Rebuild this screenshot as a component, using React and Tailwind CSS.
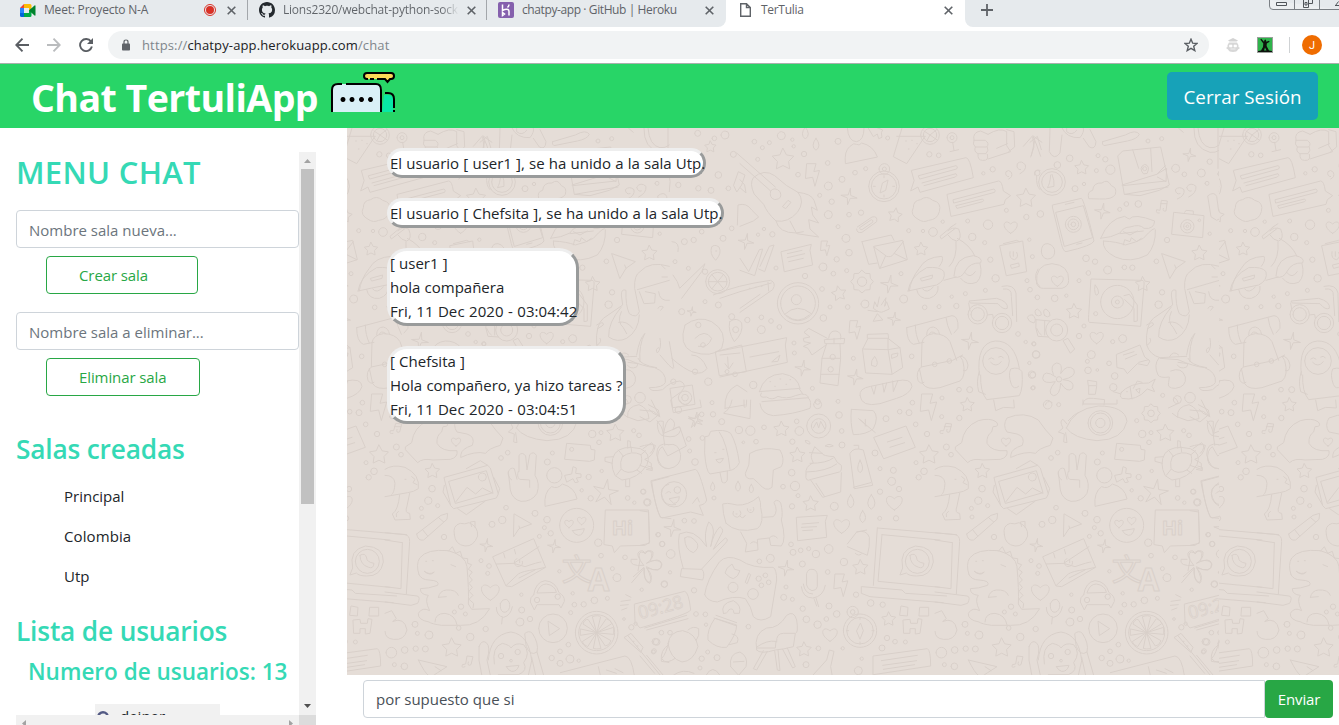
import React from "react";

/* ---------- wallpaper drawing helpers ---------- */

const dots = (list) =>
  list
    .map(([x, y, r]) => `M${x - r} ${y}a${r} ${r} 0 1 0 ${2 * r} 0a${r} ${r} 0 1 0 ${-2 * r} 0`)
    .join("");

const star = (x, y, r, n = 5, inner = 0.5, rot = -90) => {
  const pts = [];
  for (let i = 0; i < n * 2; i++) {
    const a = ((rot + (i * 180) / n) * Math.PI) / 180;
    const k = i % 2 ? r * inner : r;
    pts.push(`${(x + k * Math.cos(a)).toFixed(1)} ${(y + k * Math.sin(a)).toFixed(1)}`);
  }
  return `M${pts.join("L")}Z`;
};

const stars = (list) => list.map(([x, y, r, rot]) => star(x, y, r, 5, 0.52, rot ?? -90)).join("");
const sparks = (list) => list.map(([x, y, r, rot]) => star(x, y, r, 4, 0.25, rot ?? -80)).join("");

const heart = (x, y, s) =>
  `M${x} ${y + s}C${x - s * 1.7} ${y} ${x - s * 0.9} ${y - s * 1.3} ${x} ${y - s * 0.4}C${x + s * 0.9} ${y - s * 1.3} ${x + s * 1.7} ${y} ${x} ${y + s}Z`;

const bolt = (x, y, s) =>
  `M${x - s * 0.5} ${y - s}L${x + s * 0.3} ${y - s}L${x + s * 0.1} ${y - s * 0.3}L${x + s * 0.6} ${y - s * 0.4}L${x + s * 0.2} ${y + s}L${x} ${y + s * 0.2}L${x - s * 0.6} ${y + s * 0.3}Z`;

const drop = (x, y, s) => `M${x} ${y - s}Q${x + s} ${y + s * 0.3} ${x} ${y + s}Q${x - s} ${y + s * 0.3} ${x} ${y - s}Z`;

const Patch = ({ x, y, children }) => (
  <g transform={`translate(${x} ${y}) scale(.33333)`}>{children}</g>
);

function Doodles() {
  return (
    <g id="doodles" fill="none" stroke="#d9d0ca" strokeWidth="3" strokeLinecap="round" strokeLinejoin="round">
      {/* top right of a repeat */}
      <Patch x={740} y={125}>
        <path d={dots([[124,32,12],[157,44,5],[43,50,7],[67,68,6],[88,53,6],[161,64,5],[53,103,6],[192,87,8],[294,49,9],[263,114,7],[174,149,7],[306,163,9],[345,143,7],[377,131,6],[265,183,12],[239,211,6],[275,230,8],[265,269,12],[327,269,7],[363,263,8],[294,305,6],[318,340,12],[97,328,8],[72,312,5],[54,329,5],[327,383,10],[290,403,8],[249,426,12],[280,446,7],[195,453,8],[108,429,6],[320,437,6],[483,446,6],[246,492,7],[270,546,6],[323,546,7],[375,537,12],[491,522,12],[250,579,10],[22,585,8],[64,577,7],[93,588,7],[64,614,12],[118,606,7],[162,654,6],[163,684,6],[340,700,6],[515,694,7],[217,790,6],[40,780,11],[233,830,8],[294,829,6],[443,39,6]])} />
        <path d={dots([[568,88,8],[596,91,7],[730,145,5],[758,133,8],[799,256,6],[859,276,8],[683,288,6],[744,299,14],[608,290,5],[697,336,11],[579,321,13],[506,317,6],[549,318,5],[734,353,6],[751,404,8],[767,460,11],[868,344,5],[877,395,6],[861,467,6],[676,506,6],[635,515,5],[736,496,6],[554,547,7],[597,545,6],[649,543,8],[870,494,7],[834,627,7],[857,651,5],[881,656,6],[889,689,11],[868,714,5],[876,749,11],[878,789,6],[689,794,9],[657,794,7],[606,819,6]])} />
        <path d={stars([[129,104,34],[465,271,22,-80],[543,373,21],[297,506,23,-100],[858,220,30]])} />
        <path d={sparks([[327,215,25],[448,478,27],[18,350,24],[462,582,20],[188,730,24],[346,757,24],[690,648,26]])} />
        <path d={bolt(218, 150, 34) + bolt(256, 370, 22) + bolt(345, 615, 28) + drop(228, 58, 18) + drop(196, 24, 18)} />
        <path d="M322 9Q325 50 350 50Q372 46 372 9M316 115Q312 78 330 64Q342 52 350 58Q357 64 365 54Q400 62 412 95Z" />
        <path d="M385 10l15 25l12 -8l4 14l10 -4l-2 -14l4 -8l-24 -10" />
        <path d={dots([[432,184,46],[432,184,38],[433,132,16],[433,132,6]])} />
        <path d="M444 166L437 196L420 204L427 175ZM400 184h6M458 184h6M432 152v6M432 210v6" />
        <path d="M486 9L460 95L500 116L555 34M470 34H556M497 48h2M515 46h2M530 56h2M505 72h2" />
        <path d={dots([[570,30,28],[570,30,20],[636,38,15],[636,38,6]])} />
        <path d="M570 30L590 14M570 30L590 44M570 30L560 48M570 30L552 18M638 52L642 76M630 80L656 74" />
        <path d="M702 45Q696 22 722 18L744 28M702 46h34Q750 56 740 66H706Q696 58 702 46M706 66Q700 80 714 86H738Q748 76 742 66M714 88Q712 106 728 106Q748 108 742 88M744 28Q780 6 800 20V62L812 80L744 102M770 70L802 56M800 14L822 20L824 66L806 80" />
        <path d="M850 64L878 32L906 52M880 36L890 60L902 94M878 36L882 66L872 96" />
        <path d="M515 136L678 98Q690 98 700 158L540 202L534 186L512 198L522 168ZM536 152L648 122Q656 124 650 132L540 162ZM546 174L648 146Q654 152 646 156L552 182" />
        <path d="M622 208L776 168Q786 168 790 198L812 212L796 224L792 238L634 274ZM640 224L762 192Q768 196 764 202L642 234ZM648 242L728 222Q734 228 728 230L652 250Z" />
        <path d="M806 162Q820 156 814 142Q806 132 798 140Q794 154 806 155M840 146Q860 136 856 120Q844 104 832 116Q828 134 842 134M884 150q-2 -20 16 -14M890 154q-2 30 10 40" />
        <path d="M536 284Q508 270 520 248Q520 226 542 224Q560 210 578 226Q606 232 598 260Q592 284 566 286Q550 294 536 284Z" />
        <path d={heart(812, 305, 20)} />
        <path d="M352 306L396 276Q414 272 410 290L366 322Q350 326 350 312M362 306L394 284Q402 286 398 292L366 314Q356 314 360 306" />
        <path d="M0 116L92 198Q104 184 120 200Q130 222 104 224Q86 218 92 198M-10 84L106 186M42 206Q28 176 40 158Q72 130 104 152Q140 186 174 202Q196 230 172 262Q144 294 108 288Q80 262 72 240ZM128 244L144 226L153 232L138 250ZM174 202Q214 206 222 226L232 256L214 246L218 270L236 294L206 284L210 312L236 336L170 326L150 288M108 288Q116 324 168 324L190 320" />
        <path d="M0 164L14 180L18 204L0 188M-8 300L-6 240Q20 232 36 256L56 276L40 288L0 304" />
        <path d="M0 400L26 440L58 374L68 372L44 452L0 436M60 424L88 364L102 360L74 440L56 432" />
        <path d="M124 380L214 358L210 376L218 420L134 440ZM142 386L186 376M142 398L194 386M146 410L190 400" />
        <path d="M366 350L454 330L462 346M366 350L386 418L412 414M402 364L488 346L502 404L420 430ZM402 366L440 394Q454 398 460 388L490 350M420 430L436 394M464 386L500 404" />
        <path d={star(366, 470, 34, 8, 0.8) + dots([[366, 470, 14]])} />
        <path d={dots([[174,535,62],[174,535,52],[169,524,15]])} />
        <path d="M134 568Q172 532 214 566M140 572Q174 600 208 570" />
        <path d="M-80 510Q-10 480 92 466Q110 474 98 494L0 562M-60 520L0 500L94 474M84 472L86 498M0 550L60 508M28 490h2M46 487h2M64 484h2" />
        <path d="M418 516L412 546L404 530L400 550Q420 566 430 560L448 552L440 530L434 544L438 518L424 540M384 556L412 560M400 588L412 566L428 584Z" />
        <path d="M646 310L604 342L600 334L636 304M630 308L648 296M624 318Q636 304 656 312Q668 342 650 348Q634 346 624 330M648 350Q652 400 628 424M652 340Q690 360 704 392M508 498Q512 462 538 430Q556 396 606 394Q612 406 598 424M504 498Q510 454 560 428Q600 424 612 440Q618 466 590 480Q540 490 504 498M612 466L648 456M642 452Q644 396 700 392Q730 398 722 414Q690 412 676 438Q664 462 642 456M530 494Q536 524 568 520Q598 510 594 484M662 460Q680 484 710 472Q730 452 720 416M548 492Q560 508 580 486M674 442Q690 464 706 440M542 460L578 450L576 460L546 468Z" />
        <path d="M780 362L848 348L860 440L800 452ZM790 356L830 346L838 350M810 380Q806 402 824 404Q838 396 830 382M820 380V394M812 420L836 414L838 424L816 430Z" />
        <path d={dots([[713,568,29],[713,568,20],[786,594,29],[786,594,20]])} />
        <path d="M688 528L770 520Q806 530 802 550Q790 556 774 536L692 534ZM686 534L690 558M742 570L758 568L760 580M786 484Q822 476 828 504L830 590M790 492Q816 488 814 514L818 572" />
        <path d="M500 608L636 572Q656 572 654 610L642 624M500 608Q500 650 520 658L552 652M526 600Q526 630 538 654M618 578Q620 600 634 628M546 652Q550 630 580 626Q616 626 630 650L650 706M546 652L544 726L638 706L668 690M538 730L548 776Q560 796 600 788L660 768Q680 752 668 706L660 694M560 630Q560 606 580 606Q596 610 598 626M568 628Q572 614 588 626M544 726Q526 740 534 766Q542 780 552 772M660 694Q678 692 684 720Q682 744 670 736" />
        <path d={dots([[584, 718, 7], [628, 708, 7]])} />
        <path d="M368 672L384 640L444 640L480 668L488 728L456 748L378 744ZM368 672L444 674L480 668M444 640V672L456 746M382 640V628L444 626L446 640M394 720Q392 706 404 694Q418 714 408 724ZM456 688L474 684L472 694L456 700Z" />
        <path d="M266 640Q268 616 288 618Q306 622 302 642M254 644L314 640L312 656L256 656ZM260 656L246 700L240 774L294 782L302 700L300 656M246 700H302M242 748H298M282 640V656M262 640L206 610L192 622L210 636L190 640L192 650L212 654L190 664L204 670L216 690L258 660" />
        <path d={dots([[278, 696, 8], [272, 733, 8]])} />
        <path d="M-70 680L140 638L136 660L142 712L-60 756M-60 690L0 684M30 696L116 680M96 710L120 690L114 708Z" />
        <path d="M58 800Q72 748 128 746Q174 754 180 790M58 800L180 790M64 804Q54 820 80 816Q96 828 114 814Q140 824 166 812L188 806L178 792M66 830L206 818Q200 806 188 808M60 836Q64 868 100 872Q160 868 210 850Q216 830 206 820M90 770h2M120 762h2M150 764h2M104 784h2M138 778h2" />
        <path d="M360 812Q356 790 392 784L468 768Q514 758 516 784Q510 808 470 820L420 836Q364 848 360 812M394 784L402 808L408 782M428 776L432 802L440 774M458 768L460 800L474 766" />
        <path d={dots([[768, 708, 40]])} />
        <path d="M718 750Q708 654 766 648Q824 646 838 730M718 740Q708 768 716 800L736 808M722 750Q720 800 740 824L838 812Q850 790 846 740Q836 724 812 732Q804 750 814 778Q822 796 836 784M746 702Q754 694 762 702M776 696Q784 690 790 698M752 712Q768 730 784 710" />
        <path d="M878 570q14 12 4 24q-16 -2 -20 -16q4 -10 16 -8M890 610q6 16 14 20M894 432q-18 30 6 54" />
      </Patch>

      {/* top middle */}
      <Patch x={1030} y={125}>
        <path d={dots([[354,48,6],[395,41,6],[119,100,10],[204,92,6],[226,103,8],[241,134,14],[199,137,6],[437,130,12],[539,110,8],[463,148,7],[514,144,12],[531,175,6],[135,191,9],[162,177,5],[31,267,10],[289,237,7],[325,237,10],[269,253,6],[411,345,8],[568,147,5],[168,400,10],[195,410,8],[233,435,12],[283,427,7],[307,428,8],[379,409,7],[175,444,7],[147,467,6],[396,502,8],[386,539,11],[74,520,10],[22,517,7],[109,512,5],[162,603,6],[147,633,8],[12,657,6],[18,688,11],[278,641,12],[248,650,6],[184,689,12],[174,736,10],[172,709,6],[237,715,7],[254,753,10],[250,787,11],[202,735,4],[398,811,6],[442,824,12],[480,818,16],[8,750,9],[539,326,5],[10,788,6]])} />
        <path d={stars([[155,129,22],[508,385,24],[338,478,23],[132,560,24]])} />
        <path d={sparks([[478,90,20],[217,259,24]])} />
        <path d={heart(200, 636, 20)} />
        <path d="M0 52L22 34L34 74M4 92L14 48M60 9L58 80Q72 108 90 84L96 30M96 9Q110 40 150 38Q164 20 160 9M110 9V20Q126 34 140 16M160 40L178 66Q196 76 198 50L180 14M218 50L286 30Q318 12 328 28Q322 42 292 48L222 62Q214 58 218 50M446 10L460 22" />
        <path d={dots([[66,171,40],[66,171,31],[82,120,10],[22,144,8]])} />
        <path d="M66 148Q74 166 72 184L52 188Q60 178 62 150" />
        <path d="M176 220Q170 200 188 196Q190 172 216 174Q232 160 244 182Q262 188 256 208Q248 224 210 222Z" />
        <path d="M264 92L278 78L392 66L418 180L388 196L330 212L284 208ZM276 180L380 148L406 122M278 182L408 168M284 208L414 186M308 74L326 130M362 70L366 140M380 148L410 130L408 170L382 156M340 146Q324 128 344 118Q362 122 352 144Z" />
        <path d={dots([[344, 131, 6]])} />
        <path d="M442 222Q466 212 462 194Q448 182 436 194Q438 210 450 206M476 216Q500 204 498 184Q482 170 470 186Q474 202 484 198M388 264Q376 266 380 254L390 256L394 226L412 228L408 258Q396 260 400 250M392 236H410" />
        <path d="M68 240L154 220Q162 222 192 348Q188 362 108 380Q100 380 94 356L68 250ZM78 262L160 242L188 338L104 364ZM106 238L132 232M140 358L156 354" />
        <path d={dots([[130,298,24],[130,298,16],[130,298,7]])} />
        <path d="M212 340Q236 280 284 274Q292 280 298 282Q312 264 374 288Q372 314 342 310Q330 296 300 306Q280 306 270 324Q244 338 212 340M220 348Q260 350 286 360Q320 352 340 340Q374 302 376 314Q378 360 352 390Q300 416 256 396Q216 376 220 348M270 326L340 318M280 360L284 344L300 350L304 338L320 350L334 340M280 320L300 330L322 318" />
        <path d="M432 262L522 272L518 338L426 328ZM464 262L468 256L490 258V268" />
        <path d={dots([[472,304,20],[472,304,11],[472,304,4],[508,286,4]])} />
        <path d="M534 212Q552 198 560 214L566 258L582 274L560 286L544 276ZM564 130V9M492 9Q490 70 540 82Q556 84 568 76M504 9Q508 62 540 68Q556 70 568 60M566 140Q574 170 568 200M576 350Q600 350 594 380" />
        <path d="M396 386L466 410L438 430L420 460ZM438 430L434 420M34 380Q34 354 54 356Q76 362 74 384Q70 402 52 402Q36 400 34 380M20 476Q14 418 66 416Q118 420 116 466Q116 484 96 490H40Q24 490 20 476" />
        <path d={heart(82, 466, 18)} />
        <path d="M184 462L336 466Q344 466 342 480L332 604L178 592Q174 590 176 570ZM196 480Q206 492 206 504Q196 522 194 494ZM282 512L298 508L322 540V588L312 590L312 550L284 524" />
        <path d={dots([[262,531,50],[262,531,18],[262,531,6],[197,566,6]])} />
        <path d="M568 424Q510 406 480 440Q462 450 464 490L478 560Q470 582 448 566Q436 540 438 496Q424 490 424 510L428 540L370 580Q346 600 350 660Q360 690 390 698L470 694M470 690Q478 640 494 626M424 546Q384 592 386 636Q412 654 440 640Q476 618 478 570M424 560Q410 590 430 608L440 626M416 592Q440 586 458 610M350 600Q372 586 370 600L352 612M352 660Q368 650 360 640M418 696Q430 674 446 690M472 494L568 466M478 500L492 536L524 534L526 506L496 500M536 500Q538 530 568 526M544 420L556 432M546 456H562M534 550q4 -10 16 -4l-8 10" />
        <path d="M386 700Q370 720 384 750Q390 760 418 756L416 772Q410 790 436 790Q470 786 466 756Q456 724 422 738M390 700L444 704Q490 724 524 728Q560 742 556 772Q550 788 508 788Q510 802 548 794Q570 770 600 768Q624 778 604 800L576 820M474 700Q480 720 530 728M494 626Q476 660 480 710M540 640Q546 670 532 684Q524 672 536 668M540 690L566 720Q586 740 580 720L568 650M444 712L474 716L470 726Q450 734 442 720" />
        <path d="M18 584L60 588M18 584Q14 610 24 634L56 636M44 586V630M100 646L114 640L134 672L122 684ZM18 570Q10 556 22 552Q36 560 34 570Q24 576 18 570M44 572Q36 554 48 552Q62 560 60 572Q52 580 44 572" />
        <path d={dots([[80,615,33],[80,615,18]])} />
        <path d="M260 688L330 660L344 696L360 708L352 722L322 716L292 746L282 732L262 728ZM280 690L312 680M286 702L320 688M326 712L356 704M250 800L270 806Q300 772 356 774L376 762L366 784L374 800L352 792Q318 830 276 820Q266 814 276 800M300 784L306 822M310 790L322 768L336 772M290 800h2M318 794L330 790L328 804Z" />
        <path d="M70 748Q58 720 80 714Q100 714 92 746Q112 714 132 734Q140 756 98 764Q136 766 128 790Q112 806 92 774Q90 812 70 812Q48 804 76 770Q40 778 38 760Q40 730 78 756" />
        <path d={dots([[87, 763, 8]])} />
        <path d="M174 766L200 770V782H176ZM176 784V808H196L200 784M158 840Q160 816 190 820L224 824L222 840M46 840q4 -16 20 -8" />
      </Patch>

      <Patch x={345} y={125}>
        <path d={dots([[1058,25,9],[1108,40,7],[1140,30,12],[1165,88,9],[1058,95,8],[1120,150,10],[1150,190,7],[1098,196,9],[1060,190,8],[1000,180,8],[1018,350,9],[990,410,6],[1046,345,8],[1070,320,7],[1134,340,9],[1160,310,7],[1080,440,8],[1030,430,6],[1120,540,9],[1010,560,9],[1060,600,8],[1080,530,6],[1160,575,9],[1074,660,7],[1050,740,8],[1170,748,7],[1090,770,11],[985,770,8],[1146,740,6],[1000,855,10],[1070,868,7],[1130,890,9]])} />
        <path d={stars([[1096,66,18]])} />
        <path d={sparks([[1052,884,22],[1040,560,14]])} />
        <path d={dots([[1118,470,36],[1118,470,28]])} />
        <path d="M1100 448L1136 492M1136 448L1100 492M1090 470H1146M1100 366Q1108 356 1122 366Q1132 384 1112 406Q1092 386 1100 366M1112 378h3" />
        <path d="M984 450Q1000 470 1004 490L1080 416L1070 440L1010 520" />
        <path d="M1020 600Q1060 570 1100 590Q1150 620 1130 670Q1100 700 1040 680Q1000 660 1020 600M1050 640Q1080 610 1100 640Q1090 670 1060 664M980 700Q1060 770 1086 730Q1070 690 1040 690" />
        <path d="M1154 590Q1176 574 1190 594Q1196 624 1168 650Q1148 620 1154 590M1112 680L1190 660L1204 740L1124 752ZM1148 696L1150 730M1140 716L1152 732L1164 714M976 790L1042 780L1050 838L984 848Z" />
        <path d={dots([[1172, 614, 9], [1020, 818, 20], [1020, 818, 10]])} />
        <path d="M1140 850Q1136 800 1176 780L1206 800M1140 850L1200 840M1166 180L1180 140L1200 150L1190 180L1176 200Z" />
      </Patch>

      {/* bottom right of a repeat */}
      <Patch x={640} y={400}>
        <path d={dots([[216,8,6],[219,43,8],[146,117,7],[187,114,7],[149,153,6],[165,186,10],[297,90,11],[331,92,14],[372,82,7],[348,125,7],[310,127,4],[533,14,12],[470,64,7],[597,45,10],[478,93,13],[457,125,8],[606,135,9],[605,93,7],[738,56,9],[779,35,7],[807,38,9],[827,73,7],[861,102,8],[817,8,7],[705,159,9],[455,218,10],[429,260,7],[465,258,14],[474,287,6],[456,319,8],[583,319,12],[760,211,9],[755,244,12],[720,206,6],[777,267,8],[720,275,8],[719,355,6],[768,355,8],[133,362,7],[162,363,7],[222,294,6],[22,307,11],[9,275,7],[55,404,6],[67,432,8],[92,462,13],[90,517,5],[73,552,10],[162,571,8],[358,484,7],[391,475,12],[453,433,7],[459,457,9],[482,451,7],[506,446,6],[528,462,11],[566,447,13],[487,492,9],[612,486,11],[563,516,7],[438,561,6],[431,592,9],[457,598,6],[648,584,8],[692,609,10],[728,614,8],[488,626,8],[567,618,9],[590,642,10],[559,657,7],[499,658,10],[533,674,11],[168,642,7],[196,643,7],[325,680,7],[198,674,5],[64,698,7],[90,698,7],[46,725,10],[40,756,6],[185,776,8],[231,773,9],[203,756,6],[180,804,6],[535,745,7],[498,794,9],[741,714,8],[726,744,9],[765,725,7],[796,726,6],[655,812,12],[608,745,5],[665,776,5],[852,214,10],[836,232,8],[828,188,6]])} />
        <path d={stars([[424,88,24],[472,166,24],[512,312,24],[661,503,24],[746,658,22],[492,749,23],[867,165,30]])} />
        <path d={sparks([[97,385,26],[438,505,24],[166,62,24,-60]])} />
        <path d={heart(763, 306, 24) + heart(605, 376, 24) + heart(570, 702, 22) + bolt(603, 556, 34) + bolt(866, 22, 40) + drop(632, 304, 20) + drop(694, 306, 22) + drop(668, 350, 18) + drop(294, 259, 15) + drop(218, 260, 13) + drop(334, 266, 13)} />
        <path d="M92 0L100 38L184 22L180 0M118 0Q136 30 154 0M252 38Q270 30 276 0M252 40L330 56L332 0M312 0V20Q320 30 320 0M0 30L40 34L60 50M0 50L30 66L56 44L34 0" />
        <path d="M74 136Q66 100 70 64Q50 60 52 74Q54 104 70 108Q76 60 92 56Q112 66 98 90Q120 72 122 90Q114 118 72 108M86 134Q50 124 50 164Q60 208 86 206Q124 200 122 164Q116 126 86 134" />
        <path d="M196 110L206 108L212 94Q254 86 272 100Q290 130 298 188Q288 210 266 212L210 222Q198 214 194 160ZM238 96Q262 130 270 208M240 218L246 246Q256 254 262 240L262 214M224 158h4M248 148h4M228 180Q240 200 250 176Z" />
        <path d="M0 140Q30 130 46 136Q40 170 14 178L34 190V208L0 196" />
        <path d="M330 160Q366 138 420 150Q436 178 424 200L400 210L396 262Q378 278 356 250L340 236Q316 240 316 220L326 196Z" />
        <path d={dots([[536, 78, 36], [536, 78, 22], [102, 283, 38], [112, 270, 10]])} />
        <path d="M520 84L530 66L536 84L542 64L554 86M634 28L700 32Q718 50 700 86Q680 104 640 104Q630 70 634 28M656 56L706 98M662 60L680 78M676 58V78M702 112L798 78L826 142L732 176ZM742 126L786 112M750 142L794 128" />
        <path d="M498 222Q494 200 520 188Q510 170 516 160L524 140L546 160Q548 168 582 170Q590 190 604 196Q606 214 598 216L514 238Q494 248 498 222M510 190Q560 190 580 174M500 216Q560 214 590 192M512 240L548 292L602 276L604 218M528 250L554 290M508 158L548 160M496 122Q510 120 510 132Q496 132 496 122M556 138Q566 128 580 138Q568 144 556 138" />
        <path d="M630 160Q640 140 670 150L698 256L644 266ZM642 136H656V146M660 180Q646 210 660 218Q676 210 660 180M640 262L692 248" />
        <path d="M34 242L166 208Q178 210 200 300Q196 314 178 316L190 346L152 336L66 354Q54 352 34 252ZM78 280Q86 270 92 278M88 296L118 290Q116 310 102 310ZM158 310L172 292L178 306" />
        <path d="M258 370Q248 340 248 312Q262 308 276 312Q306 322 340 302L356 290Q364 310 362 322Q374 370 352 386Q290 402 258 370M368 352L400 350Q416 334 402 308Q408 294 422 308Q430 340 424 360Q440 420 424 438L392 436L388 414L352 418L354 450L316 456L320 430L302 396M300 348Q308 360 316 346M330 330h3M288 342h3M280 334a12 12 0 1 0 20 -2M322 326a10 10 0 1 0 18 -4M388 414Q400 400 412 414M332 430Q340 420 352 430" />
        <path d="M470 352L562 346L556 364L560 412L474 422ZM486 372L536 368M484 382L530 380M488 392L518 390M622 432L650 396Q680 388 688 412Q690 440 682 466L622 440M650 396L680 390M646 460Q656 470 664 462M0 332L26 336L28 430L0 436" />
        <path d="M130 506Q110 440 118 402Q160 380 200 440Q190 400 206 366Q222 376 220 402L212 440Q220 400 240 380Q254 390 244 402L220 448L256 414Q268 418 256 430L186 506M134 414Q150 400 172 430Q178 446 160 458Q134 450 134 414M126 506L186 508Q196 520 188 540L122 530Z" />
        <path d="M194 584Q200 540 238 486Q260 462 300 480Q336 506 400 502Q410 510 410 540L392 650Q360 670 340 650Q334 620 316 596Q280 584 232 606Q202 604 194 584M262 504L276 492L284 508L300 512L292 528L280 536L270 532L256 520ZM316 546L326 520L332 524L322 550Z" />
        <path d={dots([[279,562,15],[339,582,16],[356,536,8],[376,526,7],[386,547,7],[364,556,7]])} />
        <path d="M500 520Q504 506 516 508Q530 508 532 524V560Q530 572 516 572Q502 568 500 556ZM484 560Q488 594 518 594Q550 590 556 556M490 552Q494 582 518 582M528 594L536 620M522 596L530 618" />
        <path d="M712 384L950 404M712 384L700 556M726 404L900 420M726 404L714 544L900 562M666 560L786 570L796 580L920 588M664 560V580L690 590L910 608M780 524L788 504Q776 450 826 438Q882 440 880 486Q872 530 830 528Q806 528 800 520ZM810 466Q826 456 830 474Q830 486 852 490Q850 508 836 502Q810 494 810 466" />
        <path d={dots([[832, 484, 36]])} />
        <path d="M-16 612L134 574Q146 576 152 630Q148 642 0 684L-14 668ZM20 690L144 656M14 684L140 646M-6 512L0 480Q-10 450 14 458L24 452Q44 454 30 484Q60 476 66 494Q64 518 20 504Q44 530 28 548Q10 540 12 502L-20 530" />
        <text x="0" y="658" fontSize="54" strokeWidth="2" fontFamily="Open Sans, sans-serif" transform="rotate(-15 0 658)">09:28</text>
        <path d="M224 656Q200 690 204 720Q230 746 260 742Q290 702 290 676ZM222 654L290 678M228 646L290 668M250 640Q240 610 280 602Q306 616 298 640H282Q280 620 266 630Q262 642 250 640M276 702Q300 706 292 728L268 734" />
        <path d="M84 730Q90 694 128 692Q168 700 174 740Q160 784 126 786Q90 776 84 730M144 690Q160 676 176 686V706L168 722M86 734Q60 750 64 784Q84 790 104 776M0 768L44 820M20 766L70 826M100 826Q128 804 162 820M198 826Q218 790 240 826M272 800Q266 760 300 756Q326 770 318 800L296 826L272 800M280 786L312 784" />
        <path d="M350 750Q340 700 380 684Q416 686 440 646Q462 630 470 660Q476 700 466 700L460 740Q430 748 406 750Q360 764 350 750M410 726Q408 700 430 700L464 700M352 744L406 744L408 724Q380 720 352 740M370 752L340 806L350 810L382 754M404 752L412 810L420 812L414 750M428 748L458 804L466 800L442 744" />
        <path d={dots([[660,692,50],[660,692,40],[638,636,17],[638,636,7]])} />
        <path d="M662 670L670 692L660 718L650 694ZM660 652v6M660 726v6M620 692h6M696 692h6M520 824L560 780L568 750L582 754L572 800L576 824M700 768L862 746Q872 750 872 798L700 824ZM724 782L832 766M728 796L830 782M730 808L824 794" />
        <path d="M784 618L804 622L802 648L780 646ZM840 622H866V648H838ZM790 660L810 658L812 670L832 670L834 656L846 658L840 700L826 702V686H810V700H792Z" />
      </Patch>

      {/* bottom left of a repeat */}
      <Patch x={935} y={400}>
        <path d={dots([[73,54,8],[20,50,6],[34,141,9],[48,164,7],[338,14,13],[371,14,6],[141,266,10],[130,302,11],[109,325,6],[158,317,6],[177,411,8],[111,351,6],[321,373,9],[352,360,11],[363,323,7],[450,340,9],[486,359,10],[478,383,6],[497,400,8],[463,409,6],[368,158,7],[348,174,7],[502,159,6],[487,186,9],[605,62,6],[622,102,11],[648,98,6],[642,127,7],[746,92,6],[762,106,7],[611,231,8],[590,271,5],[617,295,8],[650,213,5],[728,294,7],[775,275,8],[786,307,9],[819,404,7],[831,432,8],[640,428,11],[648,467,7],[720,472,7],[682,506,6],[696,533,12],[838,553,9],[748,308,5],[288,482,6],[312,498,7],[308,520,6],[523,514,5],[409,584,5],[563,580,5],[628,601,10],[596,613,8],[568,614,7],[667,595,6],[557,638,6],[410,630,9],[405,666,12],[435,657,8],[739,682,8],[717,657,4],[770,569,5],[241,642,6],[228,620,8],[208,636,6],[221,684,7],[302,687,8],[90,673,9],[97,700,6],[132,705,12],[19,758,16],[59,750,10],[92,746,8],[121,747,9],[256,711,11],[28,794,6],[58,799,10],[525,754,7],[550,734,7],[500,774,8],[525,790,9],[555,777,12],[581,782,5],[815,726,10],[807,753,7],[752,671,5]])} />
        <path d={stars([[142,214,23],[691,100,27],[97,15,22],[200,744,30]]) + star(661, 278, 40, 5, 0.34, -80)} />
        <path d={sparks([[304,436,20],[507,439,20]])} />
        <path d={heart(316, 574, 27) + heart(213, 124, 14)} />
        <path d="M24 100Q12 104 16 92L26 92L32 70L50 72L44 96Q32 100 36 88M28 80H48M176 0L182 32L206 22L238 24L236 0M240 800Q228 806 232 794L242 792L246 768L264 770L258 794Q246 800 250 786" />
        <path d="M62 140L80 128Q86 80 130 62Q166 52 184 66Q196 80 174 80L170 96Q154 106 156 130Q170 156 216 152Q220 172 196 178L144 180Q112 174 98 188L62 150ZM228 162Q230 146 262 136Q272 110 246 102L216 96Q202 76 216 54Q268 32 310 60L332 90L354 114L346 136Q310 146 302 160Q270 152 228 172Z" />
        <path d="M394 84Q416 26 490 18Q570 18 576 64Q564 120 486 122Q416 116 394 84M396 72L384 58Q372 62 384 84L370 96L388 102L386 126L396 128L392 98M400 62Q420 40 430 38M444 0V12H546V0" />
        <path d={dots([[496,69,37],[496,69,30],[496,69,14]]) + star(648, 40, 28, 8, 0.8) + dots([[648,40,10]])} />
        <path d="M700 24L730 10Q724 -8 716 -6M728 50Q724 20 762 14Q790 24 792 56L760 62ZM790 14L820 30L824 50Q800 40 792 28M712 40L728 52M546 130L616 136L618 148L630 150L628 180L614 184L540 178Z" />
        <path d={dots([[560, 148, 6]])} />
        <path d="M816 62Q832 80 836 100L884 80L904 138L848 168L832 140Q816 150 818 180Q824 206 852 206" />
        <path d="M690 226Q672 190 690 160Q712 134 766 146Q800 160 786 194Q760 236 712 240ZM712 170Q740 150 768 164Q776 190 756 210Q726 226 708 206Q704 186 712 170M716 170L700 150M768 164L782 152M708 208L694 226M756 210L770 220M740 156L738 140M774 146L800 128Q814 142 796 160M788 198L802 202V212L784 208M682 190L660 184V172L686 170M722 240V260H734V238M728 144V122L736 124V140" />
        <path d="M0 208Q22 192 60 202Q106 224 100 266Q86 276 68 278L0 290M0 226Q28 226 30 250Q28 280 20 284M60 238h3M80 230l10 8l-6 10l12 6M44 284Q40 330 22 342L30 360L76 358L74 340Q58 340 66 318L74 280M40 334Q30 340 34 350" />
        <path d="M178 232L308 196L316 204L340 282L334 294L206 326L198 318ZM192 244L304 212L324 278L212 310ZM212 306L246 262L272 282L292 264L324 280M244 206L286 182L308 196M178 256L174 276L196 314M218 326L244 344L300 304M326 232L344 266L340 280" />
        <path d={dots([[292, 231, 12]])} />
        <path d="M402 214V166Q412 154 422 168L426 210L434 164Q446 152 454 166L450 226Q466 250 456 280Q440 306 408 304Q382 298 376 270L370 216Q376 200 388 206L396 238M380 240Q366 230 370 214M400 214Q394 230 404 238L434 240V262" />
        <path d={dots([[508, 226, 23], [575, 376, 51]])} />
        <path d="M480 318Q476 276 500 260Q518 268 532 252Q570 262 576 296ZM540 226L560 222L564 200L574 204L572 220L588 222V232L574 234L580 246L570 248L564 236L546 246ZM388 342L440 372L402 386L386 410ZM404 386L402 378" />
        <path d="M95 402L168 346L188 340L186 358L116 420Q98 424 95 402M112 388L128 408M160 352L176 366M208 404Q202 376 226 370Q240 374 252 368Q280 380 278 408Q266 440 240 438Q210 434 208 404M260 380L256 366L270 364V382" />
        <path d={heart(552, 370, 13) + heart(590, 361, 13)} />
        <path d="M562 392L598 386Q594 406 580 406Q568 404 562 392M662 330H790L794 426L780 436L706 438L688 458L682 438L658 434Z" />
        <text x="680" y="406" fontSize="60" fontWeight="700" fontFamily="Open Sans, sans-serif">Hi</text>
        <text x="530" y="540" fontSize="90" fontFamily="Noto Sans CJK SC, sans-serif">文</text>
        <text x="608" y="572" fontSize="94" fontWeight="700" fontFamily="Open Sans, sans-serif">A</text>
        <path d="M852 230L800 244Q810 320 826 352L858 356M852 252Q820 262 832 292Q840 320 872 314" />
        <path d="M102 524Q92 494 104 474Q126 446 190 452Q242 466 246 500Q252 570 250 612L260 628L314 626Q284 680 226 676H170Q140 672 132 666Q98 660 100 640Q112 620 134 632Q118 600 130 586Q106 584 106 566Q130 566 158 556Q166 542 132 540Q110 540 102 524M190 454L202 440L212 460L226 454L232 474L248 476V490L260 494L250 508L262 516L252 528L262 540L252 550L262 562L252 574L264 586L252 598L266 610L264 624M160 592Q164 572 184 570Q214 568 220 586M160 592L184 590M150 666Q150 640 180 640Q210 644 216 674M118 514Q132 526 148 516Q136 530 118 514M122 484h3M142 482h3M198 494L212 500" />
        <path d="M0 398L60 404Q74 406 74 424L64 582M0 420L52 428M52 428L48 566L0 560M0 576L96 588Q108 590 98 610L78 616L0 606" />
        <path d="M324 470L446 416L482 502L380 560L364 558ZM334 492L386 490L462 440M386 490L420 500Q460 486 468 486M364 556L400 522Q410 514 454 508L480 502M396 476a12 12 0 1 0 16 8M404 478v10M402 534L450 510M356 460l4 14M388 448l4 14" />
        <path d="M446 584Q452 546 480 542Q512 544 522 578Q540 588 538 604L528 624L522 614H456L448 630L436 606Q434 592 446 584M456 578Q464 552 484 552Q510 556 514 576ZM346 610Q352 596 364 598Q376 604 374 622Q368 640 354 636Q344 630 346 610M334 622Q334 648 356 652Q378 646 382 620M352 652L350 672" />
        <path d={dots([[456,600,8],[518,590,8],[504,685,43],[635,698,64],[635,698,54]])} />
        <path d="M490 664L524 686L494 706ZM635 698L622 650Q640 644 646 650ZM635 698L664 656Q678 660 680 670ZM635 698L686 682V702ZM635 698L678 722Q672 738 662 738ZM635 698L648 746Q634 748 626 746ZM635 698L608 740Q594 734 592 726ZM635 698L586 706V688ZM635 698L594 672Q598 658 608 658Z" />
        <path d="M776 496Q748 460 764 454Q776 448 780 462Q792 446 804 456Q806 478 784 490Q824 470 830 490Q830 526 784 500Q806 544 794 550Q774 544 778 504L740 548M776 496Q732 500 738 478L756 478M708 604L736 600M706 616L730 614M710 630L726 624M722 584L738 592" />
        <path d="M0 640L20 632L34 656L24 664M24 664Q58 650 66 690Q58 722 26 718Q0 716 0 694M100 780L186 800L158 818L140 830M100 780Q120 820 130 826M150 800L168 812" />
        <path d="M310 780Q316 704 378 696Q432 704 440 782L430 826M328 792Q320 740 352 730Q376 736 378 744Q390 726 416 734Q438 758 416 788Q430 812 400 824H340M282 740Q290 718 304 728Q318 740 306 780L316 826M282 740Q278 780 290 824M420 700Q432 690 442 700Q462 730 456 756Q436 770 424 740ZM456 756L476 826M440 772L452 826M364 800L402 796Q396 816 380 814Q370 812 364 800" />
        <path d={dots([[348,768,8],[398,756,8],[378,782,4]])} />
        <path d="M526 818L720 768Q740 770 748 826M640 800L646 826M664 810L694 820M690 806L714 818M718 712L738 700L774 742L768 756ZM728 706L826 826M744 724h3M756 738h3M852 724Q844 760 830 776Q836 786 852 788" />
      </Patch>
    </g>
  );
}

function Wallpaper() {
  return (
    <svg className="absolute inset-0 h-full w-full" viewBox="0 0 992 547" aria-hidden="true">
      <defs>
        <clipPath id="tile">
          <rect x="347" y="128" width="872" height="547" />
        </clipPath>
        <g id="sheet" clipPath="url(#tile)">
          <Doodles />
          <use href="#doodles" x="-550" />
          <use href="#doodles" x="550" />
        </g>
      </defs>
      <g transform="translate(-347 -128)">
        <use href="#sheet" />
        <use href="#sheet" x="872" />
      </g>
    </svg>
  );
}

/* ---------- browser chrome ---------- */

const Cross = ({ className = "" }) => (
  <svg className={`h-[9px] w-[9px] shrink-0 ${className}`} viewBox="0 0 9 9" fill="none" stroke="#5f6368" strokeWidth="1.600">
    <path d="M.7 .7l7.600 7.600M8.300 .7L.7 8.300" />
  </svg>
);

function TabStrip() {
  return (
    <div className="flex h-[27px] bg-[#e6eaed] text-[12px] leading-[20px] text-[#5f6368]">
      <div className="flex h-5 w-[248px] items-center border-r border-[#a3a7ab] pl-5">
        <svg className="mt-px h-[13px] w-4 shrink-0" viewBox="0 0 16 13">
          <path fill="#ea4335" d="M0 4L4 0V4Z" />
          <path fill="#fbbc04" d="M4 0H10Q11.500 0 11.500 1.500V4L9 7V4H4Z" />
          <path fill="#2684fc" d="M0 4H4V9H0Z" />
          <path fill="#0066da" d="M0 9H4V13H1.500Q0 13 0 11.500Z" />
          <path fill="#00ac47" d="M4 9H9V6.500L11.500 4V11.500Q11.500 13 10 13H4Z" />
          <path fill="#00832d" d="M9 6.500L14.500 1.500Q15.500 1 15.500 2V11Q15.500 12 14.500 11.500Z" />
        </svg>
        <span className="ml-2 w-[160px] tracking-[-0.2px]">Meet: Proyecto N-A</span>
        <svg className="h-3 w-3 shrink-0" viewBox="0 0 12 12">
          <circle cx="6" cy="6" r="5.500" fill="none" stroke="#d93025" />
          <circle cx="6" cy="6" r="4" fill="#d93025" />
        </svg>
        <Cross className="ml-[11px]" />
      </div>
      <div className="flex h-5 w-[239px] items-center border-r border-[#a3a7ab] pl-[11px]">
        <svg className="h-4 w-4 shrink-0" viewBox="0 0 16 16" fill="#24292e">
          <path d="M8 0C3.580 0 0 3.580 0 8c0 3.540 2.290 6.530 5.470 7.590.4.070.55-.17.55-.38 0-.19-.01-.82-.01-1.490-2.010.37-2.530-.49-2.690-.94-.09-.23-.48-.94-.82-1.130-.28-.15-.68-.52-.01-.53.63-.01 1.080.58 1.230.82.72 1.210 1.870.87 2.330.66.07-.52.28-.87.51-1.070-1.780-.2-3.640-.89-3.640-3.950 0-.87.31-1.590.82-2.150-.08-.2-.36-1.020.08-2.120 0 0 .67-.21 2.200.82.64-.18 1.320-.27 2-.27s1.360.09 2 .27c1.530-1.040 2.200-.82 2.200-.82.44 1.100.16 1.920.08 2.120.51.56.82 1.270.82 2.150 0 3.070-1.870 3.750-3.650 3.950.29.25.54.73.54 1.480 0 1.070-.01 1.930-.01 2.200 0 .21.15.46.55.38A8.010 8.010 0 0 0 16 8c0-4.420-3.580-8-8-8z" />
        </svg>
        <span className="ml-2 w-[176px] overflow-hidden whitespace-nowrap bg-gradient-to-r from-[#5f6368] from-90% to-transparent bg-clip-text tracking-[-0.22px] text-transparent">
          Lions2320/webchat-python-sock
        </span>
        <Cross className="ml-[8px]" />
      </div>
      <div className="flex h-5 w-[238px] items-center pl-[11px]">
        <svg className="h-4 w-4 shrink-0" viewBox="0 0 16 16">
          <rect width="16" height="16" rx="2" fill="#8560ad" />
          <path d="M4.500 2.500V8.500Q8 6.700 10 7.500Q11 8 11 9.500V13.500M4.500 10.500V13.500L6.500 12ZM11 2.500Q11 4 9.500 5.500" fill="none" stroke="#fff" strokeWidth="1.500" />
        </svg>
        <span className="ml-2 w-[183px] whitespace-nowrap tracking-[-0.4px]">chatpy-app · GitHub | Heroku</span>
        <Cross />
      </div>
      <div className="flex h-[27px] w-[240px] items-start bg-white">
        <div className="-ml-[8px] h-full w-2 self-stretch bg-white">
          <div className="h-full w-[9px] rounded-br-lg bg-[#e6eaed]" />
        </div>
        <div className="flex h-5 items-center pl-[15px]">
          <svg className="h-[14px] w-[11px] shrink-0" viewBox="0 0 11 14" fill="none" stroke="#5f6368" strokeWidth="1.400">
            <path d="M.7 .7H6.500L10.300 4.500V13.300H.7ZM6.500 .7V4.500H10.300" />
          </svg>
          <span className="ml-[10px] w-[183px] tracking-[-0.3px]">TerTulia</span>
          <Cross />
        </div>
      </div>
      <div className="flex w-[374px] justify-between rounded-bl-lg bg-[#e6eaed] shadow-[-8px_0_0_0_#fff]">
        <svg className="ml-[16px] mt-[4px] h-3 w-3" viewBox="0 0 12 12" stroke="#5f6368" strokeWidth="1.800">
          <path d="M6 0V12M0 6H12" />
        </svg>
        <svg className="h-[10px] w-[70px]" viewBox="0 0 70 10" fill="none" stroke="#7b8085">
          <path d="M.5 0V6Q.5 9.500 4 9.500H70M25.500 0V9.500M50.500 0V9.500" fill="#eceff1" />
          <path d="M7.500 2.500H17.500V5.500H7.500ZM34.500 0V7.500H39.500V0M39.500 3.500H43.500V0M36 2.500H38V5H36ZM66.500 5.500L69.500 1.500M66 5.500H70" stroke="#50555a" />
        </svg>
      </div>
    </div>
  );
}

function AddressBar() {
  return (
    <div className="flex h-[37px] items-center border-b border-[#a9b0ac] bg-white pr-[17px]">
      <svg className="ml-[15px] h-[14px] w-[14px]" viewBox="0 0 14 14" fill="none" stroke="#5a5e63" strokeWidth="1.900">
        <path d="M14 7H1.500M7.500 .7L1.300 7L7.500 13.300" />
      </svg>
      <svg className="ml-[18px] h-[14px] w-[14px]" viewBox="0 0 14 14" fill="none" stroke="#babcbe" strokeWidth="1.900">
        <path d="M0 7H12.500M6.500 .7L12.700 7L6.500 13.300" />
      </svg>
      <svg className="ml-[18px] h-[14px] w-[14px]" viewBox="0 0 14 14">
        <path d="M12 3.600A6 6 0 1 0 12.900 8.600" fill="none" stroke="#5a5e63" strokeWidth="1.900" />
        <path d="M14 0V6H8Z" fill="#5a5e63" />
      </svg>
      <div className="ml-[15px] flex h-7 w-[1101px] items-center rounded-full bg-[#f1f3f4] pl-[14px] pr-[11px]">
        <svg className="h-3 w-2 shrink-0" viewBox="0 0 8 12">
          <path d="M2 5V3Q2 1 4 1Q6 1 6 3V5" fill="none" stroke="#5f6368" strokeWidth="1.200" />
          <rect y="4.500" width="8" height="7" rx=".8" fill="#5f6368" />
        </svg>
        <div className="ml-3 flex-1 text-[13px] leading-5 tracking-[0.14px] text-[#80868b]">
          https://<span className="text-[#202124]">chatpy-app.herokuapp.com</span>/chat
        </div>
        <svg className="h-[14px] w-[14px]" viewBox="0 0 14 14" fill="none" stroke="#5a5e63" strokeWidth="1.400">
          <path d="M7 1.200L8.700 5.200L13 5.500L9.700 8.300L10.800 12.600L7 10.300L3.200 12.600L4.300 8.300L1 5.500L5.300 5.200Z" />
        </svg>
      </div>
      <svg className="ml-[17px] h-[14px] w-[14px]" viewBox="0 0 14 14">
        <path d="M2 2.500L4 1.500L7 0L10 1.500L12 2.500L10.500 3.500H3.500Z" fill="#d3d3d3" />
        <path d="M3 4.500H11Q13 7 12.500 9L14 10L12 11.500Q11 14 7 14Q3 14 2 11.500L0 10L1.500 9Q1 7 3 4.500Z" fill="#d7d7d7" />
        <path d="M3.500 7H6V9H3.500ZM8 7H10.500V9H8ZM4.500 11H9.500" fill="#fff" stroke="#fff" strokeWidth=".6" />
      </svg>
      <svg className="ml-[17px] h-4 w-4" viewBox="0 0 16 16">
        <rect width="16" height="16" fill="#9aa09b" />
        <rect x="1" y="1" width="14" height="14" fill="#2eb34b" />
        <path d="M1 15V14L4 13.500L6 10L6.300 6.500L3.300 2.500L4.300 1.800L7 4.800L7.500 3Q8.300 2 9 3L9.300 4.800L12 3.800L12.600 4.700L9.800 6.500L9.600 9L12 13.500L15 14V15ZM7 13.500H9.500L8 10.500Z" fill="#0d120d" fillRule="evenodd" />
      </svg>
      <div className="ml-4 h-4 w-px bg-[#cfd2d4]" />
      <div className="ml-3 flex h-5 w-5 items-center justify-center rounded-full bg-[#ef6c00] font-[Roboto,sans-serif] text-[11px] leading-none text-white">J</div>
    </div>
  );
}

/* ---------- page ---------- */

function ChatLogo() {
  return (
    <svg className="-mt-[8px] ml-[14px] h-[40px] w-[65px]" viewBox="0 0 65 40" fill="none" stroke="#000" strokeWidth="2" strokeLinecap="butt">
      <path d="M53 23H57Q62 23 62 28V40H51Z" fill="#08e8a5" stroke="none" />
      <path d="M54 21H57Q63 21 63 27V36M63 38V40" />
      <path d="M1 40V18Q1 12 7 12H45Q51 12 51 18V40Z" fill="#d9f0f7" stroke="none" />
      <path d="M1 40V18Q1 12 7 12H11M15 12H45Q50 12 50 18V40" />
      <path d="M36 1H60Q63 1 63 4Q63 7 60 7H59L56.500 10L54 7H36Q33 7 33 4Q33 1 36 1Z" fill="#fbd757" stroke="none" />
      <path d="M37 7H36Q33 7 33 4Q33 1 36 1H60Q63 1 63 4Q63 7 60 7H59L56.500 10L54 7H46M43 7H39" />
      <path d="M12 26.300a1.300 1.300 0 1 0 .01 0ZM21 26.300a1.300 1.300 0 1 0 .01 0ZM30.500 26.300a1.300 1.300 0 1 0 .01 0ZM39.500 26.300a1.300 1.300 0 1 0 .01 0Z" strokeWidth="2.400" fill="#777" />
    </svg>
  );
}

function Header() {
  return (
    <header className="flex h-16 items-center justify-between bg-[#28d567] pl-[31px] pr-[21px]">
      <div className="flex items-center">
        <h1 className="w-[286px] whitespace-nowrap pt-[3px] text-[37.500px] font-bold leading-[48px] tracking-[-0.55px] text-white">Chat TertuliApp</h1>
        <ChatLogo />
      </div>
      <button className="h-12 w-[151px] whitespace-nowrap rounded-[5px] bg-[#17a2b8] pt-px text-[18.750px] leading-[30px] text-white">Cerrar Sesión</button>
    </header>
  );
}

function RoomForm({ placeholder, action, buttonClass }) {
  return (
    <div className="mb-[18px]">
      <div className="flex h-[38px] items-center rounded-[4px] border border-[#ced4da] px-3 pt-[2px] text-[#6c757d]">{placeholder}</div>
      <button className={`ml-[30px] mt-2 block h-[38px] whitespace-nowrap rounded-[4px] border border-[#28a745] pl-8 text-left tracking-[-0.1px] text-[#28a745] ${buttonClass}`}>
        {action}
      </button>
    </div>
  );
}

function Sidebar() {
  return (
    <aside className="h-full w-[347px] bg-white pl-4 pt-6">
      <div className="flex h-[563px] w-[300px]">
        <div className="h-full w-[283px] overflow-hidden">
          <h2 className="mb-[19px] whitespace-nowrap pt-[2px] text-[31px] font-semibold leading-[37px] tracking-[0.3px] text-[#35d9b5]">MENU CHAT</h2>
          <RoomForm placeholder="Nombre sala nueva..." action="Crear sala" buttonClass="w-[152px]" />
          <RoomForm placeholder="Nombre sala a eliminar..." action="Eliminar sala" buttonClass="w-[154px]" />
          <h3 className="pt-[18px] text-[26.250px] font-semibold leading-[34px] tracking-[-0.18px] text-[#35d9b5]">Salas creadas</h3>
          <ul className="mt-[18px] flex flex-col gap-4 pl-12 text-[#212529]">
            <li>Principal</li>
            <li className="tracking-[0.1px]">Colombia</li>
            <li>Utp</li>
          </ul>
          <h3 className="mt-[26px] text-[26.250px] font-semibold leading-[34px] tracking-[-0.16px] text-[#35d9b5]">Lista de usuarios</h3>
          <h4 className="mt-[8px] whitespace-nowrap pl-3 pt-px text-[22.500px] font-semibold leading-[29px] text-[#35d9b5]">Numero de usuarios: 13</h4>
          <div className="ml-[79px] mt-[18px] flex h-10 w-[125px] items-start bg-[#f1f1f1] pl-[2px] text-[#212529]">
            <svg className="mt-[7px] h-3 w-3" viewBox="0 0 12 12" fill="none" stroke="#535a84" strokeWidth="2.500">
              <circle cx="6" cy="6" r="4.700" />
            </svg>
            <span className="ml-[11px]">deiner</span>
          </div>
        </div>
        <div className="flex h-full w-[17px] flex-col items-center bg-[#f1f1f1]">
          <svg className="h-[17px] w-[17px]" viewBox="0 0 17 17"><path d="M5 11L8.500 7L12 11Z" fill="#a3a3a3" /></svg>
          <div className="h-[335px] w-[13px] bg-[#c1c1c1]" />
          <svg className="mt-auto h-[17px] w-[17px]" viewBox="0 0 17 17"><path d="M5 6L8.500 10L12 6Z" fill="#505050" /></svg>
        </div>
      </div>
      <div className="flex h-[10px] w-[300px] bg-[#f1f1f1]">
        <svg className="h-[10px] w-[17px]" viewBox="0 0 17 10"><path d="M10 5L6 8.500L10 12Z" fill="#a3a3a3" /></svg>
        <svg className="ml-auto h-[10px] w-[17px]" viewBox="0 0 17 10"><path d="M7 5L11 8.500L7 12Z" fill="#a3a3a3" /></svg>
        <div className="w-[17px] bg-[#dcdcdc]" />
      </div>
    </aside>
  );
}

const messages = [
  { lines: ["El usuario [ user1 ], se ha unido a la sala Utp."], width: "w-[319px]" },
  { lines: ["El usuario [ Chefsita ], se ha unido a la sala Utp."], width: "w-[337px]" },
  { lines: ["[ user1 ]", "hola compañera", "Fri, 11 Dec 2020 - 03:04:42"], width: "w-[192px]" },
  { lines: ["[ Chefsita ]", "Hola compañero, ya hizo tareas ?", "Fri, 11 Dec 2020 - 03:04:51"], width: "w-[239px]" },
];

function Chat() {
  return (
    <main className="flex h-full flex-1 flex-col bg-white">
      <div className="relative h-[547px] overflow-hidden bg-[#e5ddd7]">
        <Wallpaper />
        <div className="relative flex flex-col items-start gap-5 pl-10 pt-5">
          {messages.map((m) => (
            <div
              key={m.lines.join()}
              className={`whitespace-nowrap rounded-[20px] border-[3px] border-b-[#999b9b] border-l-[#eeeeee] border-r-[#999b9b] border-t-[#eeeeee] bg-white text-[#212529] [word-spacing:0.3px] ${m.width}`}
            >
              {m.lines.map((line) => (
                <p key={line} className={line.startsWith("Fri") ? "tracking-[0.1px]" : ""}>{line}</p>
              ))}
            </div>
          ))}
        </div>
      </div>
      <div className="flex pl-4 pt-[5px]">
        <div className="flex h-[38px] w-[902px] items-center rounded-l-[4px] border border-[#ced4da] px-3 text-[#495057]">por supuesto que si</div>
        <button className="h-[38px] w-[68px] rounded-[4px] bg-[#28a745] tracking-[-0.1px] text-white">Enviar</button>
      </div>
    </main>
  );
}

export default function App() {
  return (
    <div className="h-[725px] w-[1339px] overflow-hidden bg-white font-['Open_Sans',sans-serif] text-[15px] leading-6">
      <TabStrip />
      <AddressBar />
      <Header />
      <div className="flex h-[597px]">
        <Sidebar />
        <Chat />
      </div>
    </div>
  );
}
